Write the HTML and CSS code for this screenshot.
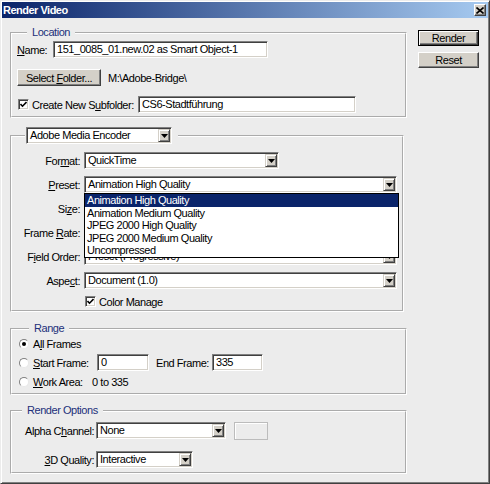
FILE: index.html
```html
<!DOCTYPE html>
<html lang="en">
<head>
<meta charset="UTF-8">
<title>Render Video</title>
<link rel="stylesheet" href="styles.css">
</head>
<body>

<div class="window">
  <div class="titlebar">
    <span class="title">Render Video</span>
    <span class="close">
      <svg width="8" height="7" viewBox="0 0 8 7"><path d="M0.5 0.5 L7.5 6.5 M7.5 0.5 L0.5 6.5" stroke="#000" stroke-width="1.6"/></svg>
    </span>
  </div>

  <div class="dialog-body">
    <div class="main">

      <!-- Location -->
      <fieldset class="group location">
        <legend class="group-title">Location</legend>
        <div class="row">
          <span class="lbl name-lbl"><u>N</u>ame:</span>
          <div class="field name-field">151_0085_01.new.02 as Smart Object-1</div>
        </div>
        <div class="row folder-row">
          <div class="btn folder-btn"><span>Select <u>F</u>older...</span></div>
          <span class="path">M:\Adobe-Bridge\</span>
        </div>
        <div class="row subfolder-row">
          <span class="check">
            <svg width="7" height="7" viewBox="0 0 7 7"><path d="M0.5 3 L2.5 5.2 L6.5 1" fill="none" stroke="#000" stroke-width="1.6"/></svg>
          </span>
          <span class="subfolder-lbl">Create New S<u>u</u>bfolder:</span>
          <div class="field subfolder-field">CS6-Stadtführung</div>
        </div>
      </fieldset>

      <!-- Encoder -->
      <fieldset class="group encoder">
        <legend class="encoder-legend">
          <div class="select encoder-select">
            <span class="value">Adobe Media Encoder</span>
            <span class="arrow"><svg width="7" height="4" viewBox="0 0 7 4"><path d="M0 0 H7 L3.5 4 Z" fill="#000"/></svg></span>
          </div>
        </legend>
        <div class="enc-rows">
          <div class="row">
            <span class="lbl enc-lbl">For<u>m</u>at:</span>
            <div class="select format-select">
              <span class="value">QuickTime</span>
              <span class="arrow"><svg width="7" height="4" viewBox="0 0 7 4"><path d="M0 0 H7 L3.5 4 Z" fill="#000"/></svg></span>
            </div>
          </div>
          <div class="row">
            <span class="lbl enc-lbl"><u>P</u>reset:</span>
            <div class="select wide-select preset-select">
              <span class="value">Animation High Quality</span>
              <span class="arrow"><svg width="7" height="4" viewBox="0 0 7 4"><path d="M0 0 H7 L3.5 4 Z" fill="#000"/></svg></span>
              <ul class="dropdown-list">
                <li class="picked">Animation High Quality</li>
                <li>Animation Medium Quality</li>
                <li>JPEG 2000 High Quality</li>
                <li>JPEG 2000 Medium Quality</li>
                <li>Uncompressed</li>
              </ul>
            </div>
          </div>
          <div class="row">
            <span class="lbl enc-lbl">Si<u>z</u>e:</span>
            <div class="select wide-select">
              <span class="value">Document Size (1920 x 1080)</span>
              <span class="arrow"><svg width="7" height="4" viewBox="0 0 7 4"><path d="M0 0 H7 L3.5 4 Z" fill="#000"/></svg></span>
            </div>
          </div>
          <div class="row">
            <span class="lbl enc-lbl">Frame <u>R</u>ate:</span>
            <div class="select wide-select">
              <span class="value">Document Frame Rate (25 fps)</span>
              <span class="arrow"><svg width="7" height="4" viewBox="0 0 7 4"><path d="M0 0 H7 L3.5 4 Z" fill="#000"/></svg></span>
            </div>
          </div>
          <div class="row">
            <span class="lbl enc-lbl">F<u>i</u>eld Order:</span>
            <div class="select wide-select">
              <span class="value">Preset (Progressive)</span>
              <span class="arrow"><svg width="7" height="4" viewBox="0 0 7 4"><path d="M0 0 H7 L3.5 4 Z" fill="#000"/></svg></span>
            </div>
          </div>
          <div class="row">
            <span class="lbl enc-lbl">Aspe<u>c</u>t:</span>
            <div class="select wide-select">
              <span class="value">Document (1.0)</span>
              <span class="arrow"><svg width="7" height="4" viewBox="0 0 7 4"><path d="M0 0 H7 L3.5 4 Z" fill="#000"/></svg></span>
            </div>
          </div>
          <div class="row color-row">
            <span class="check">
              <svg width="7" height="7" viewBox="0 0 7 7"><path d="M0.5 3 L2.5 5.2 L6.5 1" fill="none" stroke="#000" stroke-width="1.6"/></svg>
            </span>
            <span class="check-text">Color Manage</span>
          </div>
        </div>
      </fieldset>

      <!-- Range -->
      <fieldset class="group range">
        <legend class="group-title">Range</legend>
        <div class="row radio-row">
          <span class="radio on"></span>
          <span class="radio-text">A<u>l</u>l Frames</span>
        </div>
        <div class="row frame-row">
          <span class="radio"></span>
          <span class="radio-text start-lbl"><u>S</u>tart Frame:</span>
          <div class="field frame-field">0</div>
          <span class="end-lbl">End Frame:</span>
          <div class="field frame-field end-field">335</div>
        </div>
        <div class="row radio-row work-row">
          <span class="radio"></span>
          <span class="radio-text work-lbl"><u>W</u>ork Area:</span>
          <span>0 to 335</span>
        </div>
      </fieldset>

      <!-- Render Options -->
      <fieldset class="group options">
        <legend class="group-title">Render Options</legend>
        <div class="row">
          <span class="lbl opt-lbl">Alpha C<u>h</u>annel:</span>
          <div class="select alpha-select">
            <span class="value">None</span>
            <span class="arrow"><svg width="7" height="4" viewBox="0 0 7 4"><path d="M0 0 H7 L3.5 4 Z" fill="#000"/></svg></span>
          </div>
          <div class="swatch"></div>
        </div>
        <div class="row quality-row">
          <span class="lbl opt-lbl"><u>3</u>D Quality:</span>
          <div class="select quality-select">
            <span class="value">Interactive</span>
            <span class="arrow"><svg width="7" height="4" viewBox="0 0 7 4"><path d="M0 0 H7 L3.5 4 Z" fill="#000"/></svg></span>
          </div>
        </div>
      </fieldset>

    </div>

    <div class="side">
      <div class="btn side-btn default"><span>Render</span></div>
      <div class="btn side-btn reset"><span>Reset</span></div>
    </div>
  </div>
</div>

</body>
</html>
```

FILE: styles.css
```css
* {
  box-sizing: border-box;
}
body {
  margin: 0;
  font-family: 'Liberation Sans', Arial, sans-serif;
  font-size: 11px;
  letter-spacing: -0.45px;
  color: #000;
  background: #ececec;
}
u {
  text-decoration: underline;
  text-underline-offset: 1px;
}
.window {
  width: 490px;
  height: 484px;
  background: #ececec;
  border: 1px solid;
  border-color: #ececec #404040 #404040 #ececec;
  box-shadow: inset 1px 1px #fff, inset -1px -1px #808080;
  padding: 1px;
  display: flex;
  flex-direction: column;
}
.titlebar {
  height: 16px;
  background: linear-gradient(to right, #0a246a, #a6caf0);
  display: flex;
  align-items: center;
  justify-content: space-between;
  padding: 0 2px 0 1px;
  color: #fff;
  font-weight: bold;
  letter-spacing: -0.5px;
}
.close {
  width: 12px;
  height: 12px;
  background: #d4d0c8;
  border: 1px solid;
  border-color: #fff #404040 #404040 #fff;
  box-shadow: inset -1px -1px #808080;
  display: flex;
  align-items: center;
  justify-content: center;
}
.dialog-body {
  display: flex;
  flex: 1;
}
.main {
  padding: 8px 0 0 8px;
  width: 405px;
}
.side {
  margin-left: 11px;
  padding-top: 12px;
  display: flex;
  flex-direction: column;
}

/* group boxes */
.group {
  margin: 0;
  padding: 0;
  border: 2px groove #fff;
  min-width: 0;
  width: 397px;
}
.group-title {
  padding: 0 5px;
  margin-left: 10px;
  line-height: 13px;
  color: #22307a;
}
.row {
  display: flex;
  align-items: center;
  height: 17px;
  white-space: nowrap;
}
.lbl {
  flex-shrink: 0;
}

/* sunken fields */
.field {
  height: 17px;
  background: #fff;
  border: 1px solid;
  border-color: #808080 #fff #fff #808080;
  box-shadow: inset 1px 1px #404040, inset -1px -1px #d4d0c8;
  padding: 1px 3px;
  line-height: 13px;
  white-space: nowrap;
  overflow: hidden;
}
.select {
  height: 17px;
  display: flex;
  background: #fff;
  border: 1px solid;
  border-color: #808080 #fff #fff #808080;
  box-shadow: inset 1px 1px #404040, inset -1px -1px #d4d0c8;
  padding: 1px;
}
.select .value {
  flex: 1;
  padding-left: 2px;
  line-height: 13px;
  white-space: nowrap;
  overflow: hidden;
}
.select .arrow {
  width: 12px;
  background: #d4d0c8;
  border: 1px solid;
  border-color: #d4d0c8 #404040 #404040 #d4d0c8;
  box-shadow: inset 1px 1px #fff, inset -1px -1px #808080;
  display: flex;
  align-items: center;
  justify-content: center;
}

/* push buttons */
.btn {
  height: 17px;
  background: #d4d0c8;
  border: 1px solid;
  border-color: #fff #404040 #404040 #fff;
  box-shadow: inset -1px -1px #808080;
  display: flex;
  align-items: center;
  justify-content: center;
  white-space: nowrap;
}
.side-btn {
  width: 61px;
  height: 16px;
}
.side-btn.default {
  border-color: #000;
  box-shadow: inset 1px 1px #fff, inset -1px -1px #404040, inset -2px -2px #808080;
}
.side-btn.reset {
  margin-top: 6px;
}

/* check boxes and radios */
.check {
  width: 11px;
  height: 11px;
  flex-shrink: 0;
  background: #fff;
  border: 1px solid;
  border-color: #808080 #fff #fff #808080;
  box-shadow: inset 1px 1px #404040, inset -1px -1px #d4d0c8;
  display: flex;
  align-items: center;
  justify-content: center;
}
.radio {
  width: 10px;
  height: 10px;
  flex-shrink: 0;
  border-radius: 50%;
  background: #fff;
  border: 1px solid;
  border-color: #808080 #e8e8e8 #e8e8e8 #808080;
  display: flex;
  align-items: center;
  justify-content: center;
}
.radio.on::after {
  content: '';
  width: 4px;
  height: 4px;
  border-radius: 50%;
  background: #000;
}

/* location */
.location {
  padding: 2px 0 3px 5px;
}
.name-lbl {
  width: 36px;
}
.name-field {
  width: 215px;
}
.folder-row {
  margin-top: 11px;
}
.folder-btn {
  width: 84px;
}
.path {
  margin-left: 7px;
}
.subfolder-row {
  margin-top: 10px;
}
.subfolder-row .check {
  margin-left: 1px;
}
.subfolder-lbl {
  margin-left: 3px;
  width: 106px;
}
.subfolder-field {
  width: 218px;
}

/* encoder */
.encoder {
  margin-top: 9px;
  width: 394px;
}
.encoder-legend {
  margin-left: 13px;
  padding: 0 6px 0 1px;
}
.encoder-select {
  width: 146px;
}
.enc-rows {
  padding: 8px 0 3px 0;
}
.enc-rows .row + .row {
  margin-top: 7px;
}
.enc-lbl {
  width: 68px;
  text-align: right;
  margin-right: 4px;
}
.format-select {
  width: 195px;
}
.wide-select {
  width: 313px;
}
.preset-select {
  position: relative;
}
.dropdown-list {
  position: absolute;
  top: 16px;
  left: -1px;
  width: 315px;
  margin: 0;
  padding: 0;
  list-style: none;
  background: #fff;
  border: 1px solid #000;
  z-index: 2;
}
.dropdown-list li {
  height: 12.6px;
  line-height: 12.6px;
  padding-left: 2px;
}
.dropdown-list li.picked {
  background: #0a246a;
  color: #fff;
}
.enc-rows .color-row {
  margin-top: 5px;
  height: 11px;
  padding-left: 73px;
}
.check-text {
  margin-left: 3px;
}

/* range */
.range {
  margin-top: 10px;
  padding: 2px 0 5px 7px;
}
.radio-row {
  height: 13px;
}
.radio-text {
  margin-left: 4px;
}
.frame-row {
  margin-top: 4px;
}
.start-lbl {
  width: 64px;
}
.frame-field {
  width: 52px;
}
.end-lbl {
  margin-left: 7px;
  width: 56px;
}
.end-field {
  width: 51px;
}
.work-row {
  margin-top: 4px;
}
.work-lbl {
  width: 59px;
}

/* render options */
.options {
  margin-top: 9px;
  padding: 5px 0 4px 0;
}
.opt-lbl {
  width: 82px;
  text-align: right;
  margin-right: 2px;
}
.alpha-select {
  width: 130px;
}
.swatch {
  width: 34px;
  height: 18px;
  margin-left: 8px;
  border: 1px solid #bcbcbc;
  box-shadow: inset 1px 1px #fff;
}
.quality-row {
  margin-top: 12px;
}
.quality-select {
  width: 97px;
}
```
